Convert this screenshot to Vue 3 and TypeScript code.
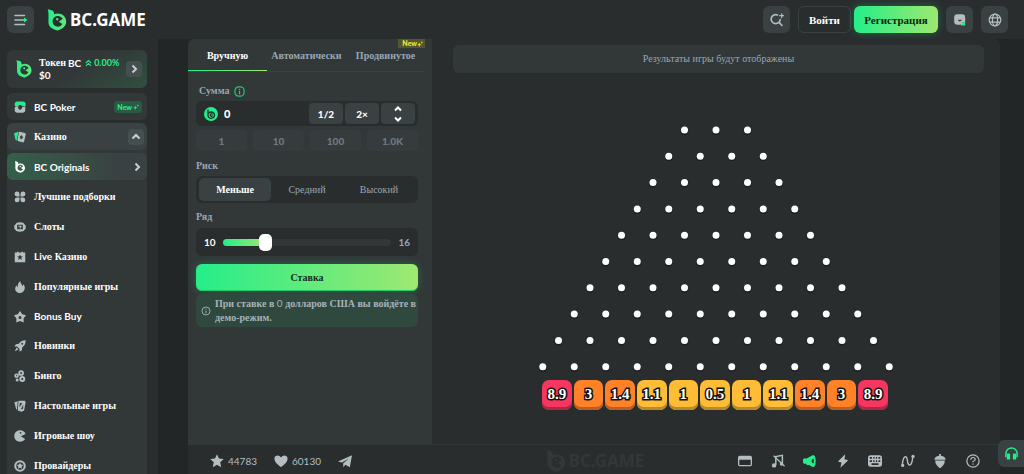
<script setup lang="ts">
import { computed, ref } from 'vue'

interface NavItem {
  latin?: string
  text?: string
  icon: string
}

const circle = (x: number, y: number, r: number): string =>
  `M${x - r} ${y}a${r} ${r} 0 1 0 ${2 * r} 0a${r} ${r} 0 1 0 ${-2 * r} 0Z`

const star = (x: number, y: number, outer: number, inner: number): string => {
  const points: string[] = []
  for (let i = 0; i < 10; i++) {
    const radius = i % 2 ? inner : outer
    const angle = (Math.PI * i) / 5 - Math.PI / 2
    points.push(`${(x + radius * Math.cos(angle)).toFixed(2)} ${(y + radius * Math.sin(angle)).toFixed(2)}`)
  }
  return `M${points.join('L')}Z`
}

const navItems: NavItem[] = [
  {
    text: 'Лучшие подборки',
    icon: 'M4 .8A3.2 3.2 0 0 1 7.3 4v3.3H4A3.2 3.2 0 1 1 4 .8ZM12 .8A3.2 3.2 0 1 1 12 7.3H8.7V4A3.2 3.2 0 0 1 12 .8ZM4 8.7h3.3V12A3.2 3.2 0 1 1 4 8.7ZM8.7 8.7H12A3.2 3.2 0 1 1 8.7 12Z'
  },
  {
    text: 'Слоты',
    icon: 'M4 2.2Q8 1 12 2.2Q13.5 3 14 4.5L15.6 5.6V10.4L14 11.5Q13.5 13 12 13.8Q8 15 4 13.8Q2.500 13 2 11.500L.4 10.400V5.600L2 4.500Q2.500 3 4 2.200ZM4.200 5V11H11.800V5ZM5.800 6.200H10.200V7.300L8.600 10H7L8.400 7.700H5.800Z'
  },
  { latin: 'Live', text: 'Казино', icon: 'M1 2H4V1H6V2H10V1H12V2H15V15H1Z' + star(8, 8.6, 4, 1.8) },
  {
    text: 'Популярные игры',
    icon: 'M8.300 0C8.600 3.500 10.800 4.300 11.200 6.800C12.300 6 12.400 4.800 12.300 4C14 6 14.700 8 14.300 10.400C13.700 14 11 16 8 16C4.500 16 1.600 13.600 1.600 10.300C1.600 8.300 2.500 6.800 3.500 5.600C3.700 7 4 7.700 4.800 8.200C4.800 5 5.800 2 8.300 0Z'
  },
  { latin: 'Bonus Buy', icon: star(8, 8.4, 8.4, 5) + circle(8, 8.6, 2) },
  {
    text: 'Новинки',
    icon: 'M15.500 .5C11.500 .3 8.500 2 6.500 5L2.500 5.500L.5 8.500L4 8.800L7.300 12L7.500 15.500L10.500 13.500L11 9.500C14 7.500 15.700 4.500 15.500 .5ZM3.500 10L1 15L6 12.500Z' + circle(11, 5, 1.2)
  },
  {
    text: 'Бинго',
    icon: circle(9.500, 4, 3.800) + circle(9.500, 4, 1.200) + circle(3.400, 7.600, 3) + circle(3.400, 7.600, .8) + circle(11, 11.900, 4) + circle(11, 11.900, 1.300) + circle(4.200, 13.300, 2)
  },
  {
    text: 'Настольные игры',
    icon: 'M.5 3L5 1.500L4 12L3 13ZM6 1H14.500L15.500 3L13.500 14L10 15.500L5 14ZM8 3.500L7 9.500L11 4.500ZM12.500 6L9 12.500L12 11.500Z'
  },
  {
    text: 'Игровые шоу',
    icon: 'M8 .2A7.8 7.8 0 1 0 14.800 12L9.200 8.300L15.400 5.200A7.800 7.800 0 0 0 8 .2Z' + circle(8.700, 3.800, 1.200)
  },
  { text: 'Провайдеры', icon: circle(8, 8, 7.700) + circle(8, 8, 4.900) + star(8, 8, 4.400, 2.400) }
]

const tabs = ['Вручную', 'Автоматически', 'Продвинутое']
const activeTab = ref(0)
const amount = ref('0')
const presets = ['1', '10', '100', '1.0K']
const risks = ['Меньше', 'Средний', 'Высокий']
const activeRisk = ref(0)

const minRows = 8
const maxRows = 16
const rows = ref(10)
const fill = computed(() => ((rows.value - minRows) / (maxRows - minRows)) * 100 + '%')

const pegs = Array.from({ length: 10 }, (_, row) =>
  Array.from({ length: row + 3 }, (_, i) => ({
    x: 177 + (i - (row + 2) / 2) * 31.5,
    y: 5 + row * 26.3
  }))
).flat()

const buckets = [
  { value: '8.9', tone: 'red' },
  { value: '3', tone: 'orange' },
  { value: '1.4', tone: 'orange' },
  { value: '1.1', tone: 'yellow' },
  { value: '1', tone: 'yellow' },
  { value: '0.5', tone: 'yellow' },
  { value: '1', tone: 'yellow' },
  { value: '1.1', tone: 'yellow' },
  { value: '1.4', tone: 'orange' },
  { value: '3', tone: 'orange' },
  { value: '8.9', tone: 'red' }
]
</script>

<template>
  <div class="page">
    <svg class="defs" aria-hidden="true">
      <defs>
        <linearGradient id="brand" x1="0" x2="1"><stop offset="0" stop-color="#24ee89" /><stop offset="1" stop-color="#5fe97c" /></linearGradient>
        <symbol id="mark" viewBox="0 0 20 23">
          <path fill-rule="evenodd" d="M.3.2 4.500 1.200Q6.800 1.800 6.800 4V5.600C13 2.800 19.600 6.800 19.600 13.200C19.600 18.500 15 20.800 10.500 22.600C5 21 1.300 19 1.100 14.500V5Q1 2 .3 .2ZM12.500 7.600C8.500 6.400 5.200 9.500 5.400 13.400C5.600 17.500 10 19.600 13.800 17.800L15.600 15.800L11.800 13.200L16 10.200Q14.800 8.300 12.500 7.600ZM10.200 9.300a1.300 1.300 0 1 0 .1 0Z" />
        </symbol>
      </defs>
    </svg>

    <header class="top">
      <button class="square" aria-label="Меню">
        <svg class="i14" viewBox="0 0 14 14"><path d="M1 2.500H10.500M1 7H9M1 11.500H10.500" stroke="#b3bec1" stroke-width="1.500" stroke-linecap="round" /><path d="M9 7h2" stroke="#24ee89" stroke-width="1.500" /><path d="M10 4.400 13.500 7 10 9.600Z" fill="#24ee89" /></svg>
      </button>
      <a class="logo" href="#"><svg class="mark" fill="url(#brand)"><use href="#mark" /></svg><span>BC.GAME</span></a>
      <div class="actions">
        <button class="square" aria-label="Поиск">
          <svg class="i14" viewBox="0 0 14 14" fill="none" stroke="#b3bec1" stroke-width="1.600" stroke-linecap="round"><path d="M7.500 2A4.500 4.500 0 1 0 10.200 6.500M9.300 9.600l2.700 2.900" /><path d="M11.700 .8V4.600M9.800 2.700h3.800" stroke-width="1.200" /></svg>
        </button>
        <div class="auth">
          <button class="login">Войти</button>
          <button class="register">Регистрация</button>
        </div>
        <button class="square" aria-label="Чат">
          <svg class="i14" viewBox="0 0 14 14"><path d="M7.500 9.500h4.700V12.500H8Z" fill="#24ee89" /><path d="M4.500 1.200H9Q12.200 1.200 12.200 4.500V9.500H9.500Q9 11.800 7 11.800H4.500Q1.200 11.800 1.200 8.500V4.500Q1.200 1.200 4.500 1.200Z" fill="#b3bec1" /><path d="M4.800 6.800h4q-.4 1.700-2 1.700t-2-1.700Z" fill="#3a4142" /></svg>
        </button>
        <button class="square" aria-label="Язык">
          <svg class="i14" viewBox="0 0 14 14" fill="none" stroke="#b3bec1" stroke-width="1.200"><circle cx="7" cy="7" r="5.800" /><ellipse cx="7" cy="7" rx="2.600" ry="5.800" /><path d="M2 4.800H12M2 9.200H12" /></svg>
        </button>
      </div>
    </header>

    <div class="body">
      <nav class="side">
        <a class="token" href="#">
          <svg class="token-mark" fill="url(#brand)"><use href="#mark" /></svg>
          <span class="token-text">
            <span class="token-line"><span>Токен</span> <span class="latin">BC</span>
              <span class="rate"><svg viewBox="0 0 8 8" fill="none" stroke="#24ee89" stroke-width="1.200"><path d="M1 4 4 1.200 7 4M1 7.300 4 4.500 7 7.300" /></svg>0.00%</span>
            </span>
            <span class="latin">$0</span>
          </span>
          <span class="chip"><svg viewBox="0 0 10 10"><path d="M3.500 1.500 7 5 3.500 8.500" /></svg></span>
        </a>
        <a class="row poker" href="#">
          <svg class="nav-icon" viewBox="0 0 16 16"><path d="M1 7V4Q1 .5 4.500 .5H12Q15.500 .5 15.500 4V6.500H11Q8 4 5.500 7Z" fill="#24ee89" /><path d="M1 8.500Q3 6.500 5.500 7Q5 11.500 8.500 11.500Q10.500 11.300 11 8L15 7V12Q15 15.500 11.500 15.500H4.500Q1 15.500 1 12Z" fill="#b3bec1" /></svg>
          <span class="latin">BC Poker</span>
          <span class="new">New<svg viewBox="0 0 8 8"><path d="M3 1.500 3.800 4.200 6.500 5 3.800 5.800 3 8 2.200 5.800 0 5 2.200 4.200ZM6.500 0 7 1.500 8 2 7 2.500 6.500 4 6 2.500 5 2 6 1.500Z" /></svg></span>
        </a>
        <div class="group">
          <button class="row group-head">
            <svg class="nav-icon" viewBox="0 0 16 16"><path d="M0 3 6 1 3.500 12.500Q2.500 12.500 2 11.500Z" fill="#24ee89" /><path fill-rule="evenodd" d="M7.500 1 14.500 2.500Q16 3 15.700 4.300L13.500 14Q13 15.500 11.500 15.100L5.800 13.700Q4.300 13.200 4.600 11.800L6.500 2Q6.800 1 7.500 1ZM10.200 5.200 7.500 8 9.300 11.200 12.300 8.500Z" fill="#b3bec1" /></svg>
            <span>Казино</span>
            <span class="chip end"><svg viewBox="0 0 10 10"><path d="M1.500 6.500 5 3 8.500 6.500" /></svg></span>
          </button>
          <a class="row originals" href="#">
            <svg class="nav-icon" fill="#fff"><use href="#mark" /></svg>
            <span class="latin">BC Originals</span>
            <svg class="arrow end" viewBox="0 0 10 10"><path d="M3.500 1.500 7 5 3.500 8.500" /></svg>
          </a>
          <ul class="list">
            <li v-for="item in navItems" :key="item.icon">
              <a class="row" href="#">
                <svg class="nav-icon" viewBox="0 0 16 16" fill="#b3bec1"><path fill-rule="evenodd" :d="item.icon" /></svg>
                <span><span v-if="item.latin" class="latin">{{ item.latin }}</span> {{ item.text }}</span>
              </a>
            </li>
          </ul>
        </div>
      </nav>

      <main class="main">
        <div class="game">
          <section class="controls">
            <div class="tabs" role="tablist">
              <button v-for="(tab, i) in tabs" :key="tab" role="tab" class="tab" :class="{ active: activeTab === i }" :aria-selected="activeTab === i" @click="activeTab = i">{{ tab }}</button>
              <span class="tab-new">New<svg viewBox="0 0 8 8"><path d="M3 1.500 3.800 4.200 6.500 5 3.800 5.800 3 8 2.200 5.800 0 5 2.200 4.200ZM6.500 0 7 1.500 8 2 7 2.500 6.500 4 6 2.500 5 2 6 1.500Z" /></svg></span>
            </div>
            <form class="form" @submit.prevent>
              <label class="label amount-label" for="amount">Сумма
                <svg viewBox="0 0 12 12" fill="none" stroke="#24c678" stroke-width="1.300"><rect x="1" y="1" width="10" height="10" rx="4" /><path d="M6 5.200V9M6 3V4.300" /></svg>
              </label>
              <div class="amount">
                <svg class="coin" viewBox="0 0 14 14"><circle cx="7" cy="7" r="7" fill="#24ee89" /><path d="M4 2.500V8.500Q4.300 11.300 7.200 11.300Q10.500 11 10.500 8Q10.200 5 7.200 5Q5 5 4 7M8.800 7.300Q7 6.200 6.300 8Q6.700 9.800 8.800 9" fill="none" stroke="#14382a" stroke-width="1.300" /></svg>
                <input id="amount" v-model="amount" type="text" />
                <button type="button" class="mini">1/2</button>
                <button type="button" class="mini">2×</button>
                <button type="button" class="mini" aria-label="Изменить сумму"><svg viewBox="0 0 10 16"><path d="M2 4.500 5 1.500 8 4.500M2 11.500 5 14.500 8 11.500" /></svg></button>
              </div>
              <div class="presets"><button v-for="preset in presets" :key="preset" type="button">{{ preset }}</button></div>
              <span id="risk" class="label">Риск</span>
              <div class="risks" role="group" aria-labelledby="risk">
                <button v-for="(risk, i) in risks" :key="risk" type="button" :class="{ active: activeRisk === i }" :aria-pressed="activeRisk === i" @click="activeRisk = i">{{ risk }}</button>
              </div>
              <label class="label" for="rows">Ряд</label>
              <div class="slider">
                <span class="low">{{ rows }}</span>
                <div class="track"><div class="fill" :style="{ width: fill }"></div><input id="rows" v-model.number="rows" type="range" :min="minRows" :max="maxRows" /></div>
                <span>{{ maxRows }}</span>
              </div>
              <button type="submit" class="bet">Ставка</button>
              <p class="notice">
                <svg viewBox="0 0 10 10" fill="none" stroke="#98a7b5"><circle cx="5" cy="5" r="4" /><path d="M5 4.500V7.300M5 2.700V3.700" /></svg>
                <span>При ставке в <span class="zero">0</span> долларов США вы войдёте в демо-режим.</span>
              </p>
            </form>
          </section>

          <section class="stage">
            <div class="results">Результаты игры будут отображены</div>
            <div class="board">
              <svg class="pegs" viewBox="0 0 354 248">
                <g v-for="(peg, i) in pegs" :key="i"><circle :cx="peg.x" :cy="peg.y + 1" r="4" fill="#1c1f20" /><circle :cx="peg.x" :cy="peg.y" r="3.500" fill="#fff" /></g>
              </svg>
              <div class="buckets"><span v-for="(bucket, i) in buckets" :key="i" :class="bucket.tone">{{ bucket.value }}</span></div>
            </div>
          </section>
        </div>

        <footer class="bar">
          <div class="social">
            <button><svg viewBox="0 0 16 16"><path d="M8 .3 10.300 5.200 15.700 5.800 11.700 9.500 12.800 15 8 12.300 3.200 15 4.300 9.500 .3 5.800 5.700 5.200Z" /></svg>44783</button>
            <button><svg viewBox="0 0 16 16"><path d="M8 15C5 13 .5 9.500 .5 5.500C.5 1 6 .5 8 4C10 .5 15.500 1 15.500 5.500C15.500 9.500 11 13 8 15Z" /></svg>60130</button>
            <button aria-label="Поделиться"><svg viewBox="0 0 16 16"><path d="M0 8.500 16 1.500 13.500 15 8.500 12.300 6 15V10.500L12.500 5 4.500 9.800Z" /></svg></button>
          </div>
          <div class="watermark"><svg class="mark"><use href="#mark" /></svg><span>BC.GAME</span></div>
          <div class="tools">
            <button aria-label="Режим театра"><svg viewBox="0 0 16 16"><path fill-rule="evenodd" d="M2 2H14Q16 2 16 4V12Q16 14 14 14H2Q0 14 0 12V4Q0 2 2 2ZM1.500 6.500V12.500H14.500V6.500Z" /></svg></button>
            <button aria-label="Музыка"><svg viewBox="0 0 16 16"><path d="M5.500 12.500V3L13 1.500V11" fill="none" stroke="#b3bec1" stroke-width="1.700" /><circle cx="3.500" cy="13" r="2.500" /><circle cx="12" cy="11.500" r="2" /><path d="M3 2 15.500 14" stroke="#b3bec1" stroke-width="1.400" /></svg></button>
            <button class="on" aria-label="Звук"><svg viewBox="0 0 16 16"><path fill-rule="evenodd" d="M1.500 5.200H4L11.500 1Q14.500 1.500 14.500 8T11.500 15L7 12.500H4.500L3.500 11H1.500Q0 11 0 9.500V6.700Q0 5.200 1.500 5.200ZM12 5.200Q9.800 5.800 9.800 8T12 10.800Q12.800 8 12 5.200Z" /></svg></button>
            <button aria-label="Турбо"><svg viewBox="0 0 16 16"><path d="M10.500 .3 2.200 8.500 6.300 9.700 5 15.700 14 7 9.700 6Z" /></svg></button>
            <button aria-label="Горячие клавиши"><svg viewBox="0 0 16 16"><path fill-rule="evenodd" d="M3 1.500H13Q16 1.500 16 4.500V11.500Q16 14.500 13 14.500H3Q0 14.500 0 11.500V4.500Q0 1.500 3 1.500ZM2 3.500V5.500H4.500V3.500ZM6 3.500V5.500H7.500V3.500ZM9 3.500V5.500H10.500V3.500ZM12 3.500V5.500H14V3.500ZM2 7V9H4.500V7ZM6 7V9H7.500V7ZM9 7V9H10.500V7ZM12 7V9H14V7ZM4 10.500V12.500H12V10.500Z" /></svg></button>
            <button aria-label="Статистика"><svg viewBox="0 0 16 16"><path d="M1.500 12.500C2.500 1 6.500 1 7.200 7C8 15.500 12.500 14.500 13.500 3" fill="none" stroke="#b3bec1" stroke-width="1.600" /><circle cx="1.900" cy="13" r="1.900" /><circle cx="13.700" cy="2.800" r="1.900" /></svg></button>
            <button aria-label="Сид"><svg viewBox="0 0 16 16"><path d="M7 0H9V2Q14 2.500 14.500 6.500H1.500Q2 2.500 7 2ZM2.500 7.500H13.500Q13.500 12.500 8.500 16H7.500Q2.500 12.500 2.500 7.500Z" /></svg></button>
            <button aria-label="Помощь"><svg viewBox="0 0 16 16" fill="none" stroke="#b3bec1" stroke-width="1.400"><circle cx="8" cy="8" r="7" /><path d="M5.500 6.500Q5.500 4 8 4T10.500 6.200Q10.500 7.300 8 8.500V9.500M8 10.800V12.400" /></svg></button>
          </div>
        </footer>
      </main>
    </div>

    <button class="support" aria-label="Поддержка"><svg viewBox="0 0 16 16"><path d="M2 12V8A6 6 0 0 1 14 8V12" fill="none" stroke="#24ee89" stroke-width="1.600" /><rect x="3" y="8" width="3.500" height="6.500" rx="1" fill="#24ee89" /><rect x="9.500" y="8" width="3.500" height="6.500" rx="1" fill="#24ee89" /></svg></button>
  </div>
</template>

<style>
body {
  margin: 0;
  background: #232626;
}
</style>

<style scoped>
.page {
  height: 100vh;
  display: flex;
  flex-direction: column;
  overflow: hidden;
  background: #232626;
  color: #fff;
  font: 700 10px/14px "Liberation Serif", serif;
}
.page * { box-sizing: border-box; }
button, input { font: inherit; color: inherit; border: 0; padding: 0; margin: 0; background: none; }
button { cursor: pointer; }
a { color: inherit; text-decoration: none; }
svg { display: block; flex: none; }
.defs { position: absolute; width: 0; height: 0; }
.latin { font-family: Lato, sans-serif; }

.top {
  flex: none;
  height: 39px;
  display: flex;
  align-items: center;
  padding: 0 16px 0 7px;
  background: #292d2e;
}
.square {
  width: 27px;
  height: 27px;
  display: grid;
  place-items: center;
  border-radius: 6px;
  background: #3a4142;
}
.i14 { width: 14px; height: 14px; }
.logo, .watermark {
  display: flex;
  align-items: center;
  gap: 3px;
  font: 700 17px/22px "Noto Sans", sans-serif;
}
.logo { margin-left: 13px; }
.mark { width: 20px; height: 22px; }
.actions { margin-left: auto; display: flex; gap: 8px; }
.auth { display: flex; gap: 3px; }
.login { width: 53px; border: 1px solid #3a4142; border-radius: 6px; font-size: 11px; }
.register {
  width: 84px;
  border-radius: 6px;
  background: linear-gradient(90deg, #24ee89, #9fe871);
  box-shadow: 0 0 8px #24ee8950;
  color: #0c1f14;
  font-size: 11px;
}

.body { flex: 1; min-height: 0; display: flex; }
.side {
  flex: none;
  width: 158px;
  padding: 11px 11px 0 7px;
  overflow: hidden;
  background: #292d2e;
}
.token {
  height: 38px;
  display: flex;
  align-items: center;
  padding: 0 5px 0 9px;
  border-radius: 6px;
  background: linear-gradient(150deg, #323738 50%, #30503f);
}
.token-mark { width: 16px; height: 18px; margin-right: 7px; }
.token-text { display: flex; flex-direction: column; line-height: 12px; white-space: nowrap; }
.token-line { display: flex; gap: 2px; align-items: center; }
.rate { display: flex; align-items: center; gap: 2px; margin-left: 2px; color: #24ee89; font: 700 9px/12px Lato, sans-serif; }
.rate svg { width: 7px; height: 8px; }
.chip {
  width: 16px;
  height: 16px;
  margin-left: auto;
  display: grid;
  place-items: center;
  border-radius: 4px;
  background: #464f50;
}
.chip svg, .arrow { width: 10px; height: 10px; fill: none; stroke: #c5cfd2; stroke-width: 2; }
.end { margin-left: auto; }
.row {
  width: 100%;
  height: 27px;
  display: flex;
  align-items: center;
  gap: 8px;
  padding: 1px 3px 0 7px;
  border-radius: 6px;
  white-space: nowrap;
}
.nav-icon { width: 12px; height: 12px; }
.poker { margin: 5px 0 3px; padding-right: 5px; background: #323738; }
.new {
  margin-left: auto;
  height: 12px;
  display: flex;
  align-items: center;
  gap: 1px;
  padding: 0 3px;
  border-radius: 3px;
  background: #2b5a43;
  color: #24ee89;
  font: 900 7px/12px Lato, sans-serif;
}
.new svg { width: 6px; height: 6px; fill: #24ee89; }
.group { background: #323738; border-radius: 6px; }
.group-head { background: #3a4142; }
.originals { margin-top: 3px; padding-right: 5px; background: linear-gradient(90deg, #34604a, #3a4142 80%); }
.list {
  height: 298px;
  margin: 2px 0 0;
  padding: 0;
  display: grid;
  grid-auto-rows: 1fr;
  align-items: center;
  list-style: none;
}

.main {
  flex: 1;
  min-width: 0;
  display: flex;
  flex-direction: column;
  margin: 0 24px 0 30px;
  border-radius: 6px 6px 0 0;
  overflow: hidden;
  background: #292d2e;
}
.game { flex: 1; min-height: 0; display: flex; }
.controls { flex: none; width: 244px; background: #323738; color: #98a7b5; }
.tabs {
  position: relative;
  height: 33px;
  display: grid;
  grid-template-columns: repeat(3, 1fr);
  margin-right: 7px;
  border-bottom: 1px solid #3a4142;
}
.tab { padding-top: 2px; border-bottom: 1px solid transparent; }
.tab.active { color: #fff; border-image: linear-gradient(90deg, #24ee89, #9fe871) 1; }
.tab-new {
  position: absolute;
  top: 0;
  right: 0;
  display: flex;
  align-items: center;
  padding: 0 2px 0 4px;
  background: #54562f;
  color: #f3e93c;
  font: 900 7px/9px Lato, sans-serif;
}
.tab-new svg { width: 6px; height: 6px; fill: #f3e93c; }
.form { display: flex; flex-direction: column; padding: 12px 14px 0 8px; }
.label { display: flex; align-items: center; height: 14px; }
.amount-label { padding-left: 3px; gap: 5px; }
.amount-label svg { width: 11px; height: 11px; }
.amount {
  height: 25px;
  display: flex;
  gap: 2px;
  padding: 2px 3px 2px 2px;
  margin: 3px 0 4px;
  border-radius: 6px;
  background: #292d2e;
  color: #fff;
  font: 900 11px/14px Lato, sans-serif;
}
.coin { width: 14px; height: 14px; margin: 4px 4px 0 6px; }
.amount input { flex: 1; min-width: 0; }
.mini { width: 34px; border-radius: 4px; background: #3a4142; display: grid; place-items: center; font-size: 10px; }
.mini svg { width: 10px; height: 16px; fill: none; stroke: #fff; stroke-width: 2; }
.presets { display: grid; grid-template-columns: repeat(4, 1fr); gap: 6px; margin-bottom: 8px; }
.presets button { height: 21px; border-radius: 4px; background: #363c3d; color: #707a7d; font: 900 10px/14px Lato, sans-serif; }
.risks {
  height: 27px;
  display: grid;
  grid-template-columns: repeat(3, 1fr);
  padding: 2px 3px;
  margin: 3px 0 7px;
  border-radius: 6px;
  background: #292d2e;
}
.risks button { border-radius: 5px; font-weight: 400; }
.risks .active { background: #3a4142; color: #fff; font-weight: 700; }
.slider {
  height: 28px;
  display: flex;
  align-items: center;
  gap: 7px;
  padding: 0 8px;
  margin: 4px 0 8px;
  border-radius: 6px;
  background: #292d2e;
  font: 700 10px/14px Lato, sans-serif;
}
.low { color: #fff; }
.track { position: relative; flex: 1; height: 7px; border-radius: 4px; background: #323738; }
.fill { height: 7px; border-radius: 4px; background: linear-gradient(90deg, #24ee89, #9fe871); }
.track input {
  position: absolute;
  top: -5px;
  left: -6px;
  width: calc(100% + 12px);
  height: 17px;
  appearance: none;
}
.track input::-webkit-slider-thumb { appearance: none; width: 13px; height: 17px; border-radius: 5px; background: #fff; }
.bet {
  height: 27px;
  border-radius: 6px;
  background: linear-gradient(90deg, #24ee89, #9fe871);
  box-shadow: 0 0 8px #24ee8940, inset 0 -1px #1dca6a;
  color: #14301f;
}
.notice {
  display: flex;
  align-items: center;
  gap: 4px;
  margin: 3px 0 0;
  padding: 2px 0 2px 5px;
  border-radius: 6px;
  background: #30493e;
  color: #a5b3b8;
}
.notice svg { width: 10px; height: 10px; }
.zero { font-family: Lato, sans-serif; font-weight: 400; }

.stage { flex: 1; min-width: 0; display: flex; flex-direction: column; align-items: center; }
.results {
  align-self: stretch;
  height: 28px;
  margin: 6px 16px 52px 21px;
  border-radius: 6px;
  background: #323738;
  color: #98a7b5;
  font-weight: 400;
  line-height: 28px;
  text-align: center;
}
.board { width: 100%; max-width: 354px; }
.pegs { width: 100%; height: auto; }
.buckets { display: grid; grid-template-columns: repeat(11, 1fr); gap: 2px; margin: 7px 5px 0 3px; }
.buckets span {
  height: 30px;
  border-radius: 7px;
  font-size: 15px;
  line-height: 28px;
  text-align: center;
  -webkit-text-stroke: 3px #111;
  paint-order: stroke fill;
}
.red { background: #f43660; box-shadow: inset 0 -3px #ad2847; }
.orange { background: #ff8128; box-shadow: inset 0 -3px #b95f22; }
.yellow { background: #ffbc36; box-shadow: inset 0 -3px #b98a2c; }

.bar {
  flex: none;
  height: 30px;
  display: grid;
  grid-template-columns: 1fr auto 1fr;
  align-items: center;
  padding: 3px 20px 0 22px;
  border-top: 1px solid #323738;
  color: #b3bec1;
}
.bar button svg { width: 14px; height: 14px; fill: #b3bec1; }
.social { display: flex; gap: 17px; }
.social button { display: flex; align-items: center; gap: 4px; font: 400 10px/14px Lato, sans-serif; }
.watermark { color: #323738; fill: #323738; }
.tools { display: flex; justify-content: space-between; justify-self: end; width: 242px; max-width: 100%; }
.bar .on svg { fill: #24ee89; }
.bar .tools button:last-child svg { fill: none; }
.support {
  position: fixed;
  right: 0;
  bottom: 7px;
  width: 26px;
  height: 27px;
  display: grid;
  place-items: center;
  border-radius: 6px 0 0 6px;
  background: #3a4142;
}
.support svg { width: 15px; height: 15px; }
</style>
